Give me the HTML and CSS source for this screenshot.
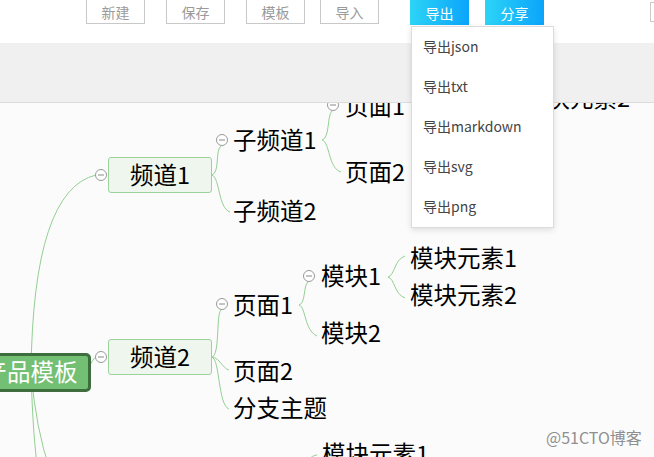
FILE: index.html
```html
<!DOCTYPE html>
<html lang="zh-CN">
<head>
    <meta charset="UTF-8">
    <meta name="viewport" content="width=device-width, initial-scale=1.0">
    <title>脑图编辑器</title>
    <link rel="stylesheet" href="styles.css">
</head>
<body>

<header class="toolbar">
    <button class="tool-btn tool-wide">新建</button>
    <button class="tool-btn tool-wide">保存</button>
    <button class="tool-btn">模板</button>
    <button class="tool-btn">导入</button>
    <span class="tool-sep"></span>
    <button class="tool-btn tool-blue">导出</button>
    <button class="tool-btn tool-blue">分享</button>
    <button class="tool-btn tool-edge"></button>
</header>

<div class="subbar"></div>

<main class="canvas">
    <!-- connector lines, drawn in page coordinates -->
    <svg class="links" width="654" height="354" viewBox="0 103 654 354">
        <g fill="none" stroke="#93cf93" stroke-width="1">
            <path d="M31 372 Q33 190 96 175"/>
            <path d="M31 372 Q33 440 38 470"/>
            <path d="M31 372 Q36 430 50 470"/>
            <path d="M89 368 Q93 358 96 357"/>
            <path d="M212 175 C220 172 215 150 221 146"/>
            <path d="M212 175 C220 178 218 208 230 212"/>
            <path d="M322 140 C330 138 327 115 332 111"/>
            <path d="M322 140 C330 142 328 168 341 172"/>
            <path d="M212 357 C220 355 216 314 221 310"/>
            <path d="M212 357 C220 358 222 368 229 370"/>
            <path d="M212 357 C220 360 218 405 229 409"/>
            <path d="M299 305 C306 303 303 286 308 282"/>
            <path d="M299 305 C306 307 304 330 317 336"/>
            <path d="M388 277 C395 275 394 260 405 256"/>
            <path d="M388 277 C395 279 394 294 405 298"/>
            <path d="M305 470 C308 460 310 456 317 455"/>
        </g>
        <g fill="#fff" stroke="#999" stroke-width="1">
            <circle cx="101" cy="175" r="5.5"/>
            <circle cx="101" cy="357" r="5.5"/>
            <circle cx="222" cy="140" r="5.5"/>
            <circle cx="333" cy="105" r="5.5"/>
            <circle cx="222" cy="304" r="5.5"/>
            <circle cx="309" cy="276" r="5.5"/>
        </g>
        <g stroke="#888" stroke-width="1">
            <path d="M98 175 H104"/>
            <path d="M98 357 H104"/>
            <path d="M219 140 H225"/>
            <path d="M330 105 H336"/>
            <path d="M219 304 H225"/>
            <path d="M306 276 H312"/>
        </g>
    </svg>

    <div class="topic-root" style="left:-30px; top:250px;">产品模板</div>
    <div class="topic-main" style="left:108px; top:54px;">频道1</div>
    <div class="topic-main" style="left:108px; top:236px;">频道2</div>

    <div class="topic" style="left:233px; top:24px;">子频道1</div>
    <div class="topic" style="left:233px; top:95px;">子频道2</div>
    <div class="topic" style="left:345px; top:-10px;">页面1</div>
    <div class="topic" style="left:345px; top:56px;">页面2</div>
    <div class="topic" style="left:523px; top:-18px;">模块元素2</div>

    <div class="topic" style="left:233px; top:189px;">页面1</div>
    <div class="topic" style="left:233px; top:255px;">页面2</div>
    <div class="topic" style="left:233px; top:292px;">分支主题</div>
    <div class="topic" style="left:321px; top:160px;">模块1</div>
    <div class="topic" style="left:321px; top:217px;">模块2</div>
    <div class="topic" style="left:410px; top:142px;">模块元素1</div>
    <div class="topic" style="left:410px; top:179px;">模块元素2</div>
    <div class="topic" style="left:322px; top:338px;">模块元素1</div>

    <div class="watermark">@51CTO博客</div>
</main>

<ul class="export-menu">
    <li>导出json</li>
    <li>导出txt</li>
    <li>导出markdown</li>
    <li>导出svg</li>
    <li>导出png</li>
</ul>

</body>
</html>
```

FILE: styles.css
```css
body {
    font-family: "Noto Sans CJK SC", "Noto Sans", sans-serif;
    margin: 0;
    padding: 0;
    width: 654px;
    height: 457px;
    overflow: hidden;
    position: relative;
    background-color: #fbfbfb;
}

.toolbar {
    display: flex;
    align-items: flex-start;
    gap: 15px;
    height: 43px;
    padding-left: 86px;
    background-color: #fff;
    box-sizing: border-box;
    overflow: hidden;
}
.tool-btn {
    width: 59px;
    height: 24px;
    padding: 0;
    border: 1px solid #c8c8c8;
    border-top: none;
    background-color: #fff;
    color: #9a9a9a;
    font-family: inherit;
    font-size: 14px;
    line-height: 22px;
    flex-shrink: 0;
}
.tool-wide {
    margin-right: 6px;
}
.tool-sep {
    width: 1px;
    height: 25px;
    background-color: #e2e2e2;
}
.tool-blue {
    height: 25px;
    border: none;
    margin-left: 1px;
    background: linear-gradient(to right, #2dd4f6, #0ba4fb);
    color: #fff;
}
.tool-edge {
    margin-left: 91px;
    height: 20px;
    margin-top: 2px;
    border-top: 1px solid #c8c8c8;
}

.subbar {
    height: 59px;
    background-color: #f0f0f0;
    border-bottom: 1px solid #dcdcdc;
}

.canvas {
    position: relative;
    height: 354px;
    overflow: hidden;
    background-color: #fbfbfb;
}
.links {
    position: absolute;
    left: 0;
    top: 0;
}

.topic {
    position: absolute;
    margin-top: -2px;
    font-size: 23.5px;
    line-height: 28px;
    white-space: nowrap;
    color: #000;
}
.topic-main {
    position: absolute;
    width: 104px;
    height: 36px;
    box-sizing: border-box;
    border: 1px solid #9bd39b;
    border-radius: 3px;
    background-color: #eef6ee;
    color: #000;
    font-size: 23.5px;
    line-height: 32px;
    text-align: center;
}
.topic-root {
    position: absolute;
    width: 121px;
    height: 39px;
    box-sizing: border-box;
    border: 3px solid #3e6d3e;
    border-radius: 5px;
    background-color: #73bf73;
    color: #fff;
    font-size: 23.5px;
    line-height: 31px;
    text-align: center;
    white-space: nowrap;
}

.watermark {
    position: absolute;
    left: 546px;
    top: 323px;
    font-size: 16px;
    line-height: 22px;
    color: #8f8f8f;
    text-shadow: 0 0 2px #fff;
}

.export-menu {
    position: absolute;
    left: 411px;
    top: 26px;
    width: 143px;
    margin: 0;
    padding: 0;
    list-style: none;
    background-color: #fff;
    border: 1px solid #dcdcdc;
    box-sizing: border-box;
    box-shadow: 0 2px 6px rgba(0, 0, 0, 0.12);
}
.export-menu li {
    height: 40px;
    line-height: 39px;
    padding-left: 11px;
    font-size: 14px;
    color: #444;
}
```
